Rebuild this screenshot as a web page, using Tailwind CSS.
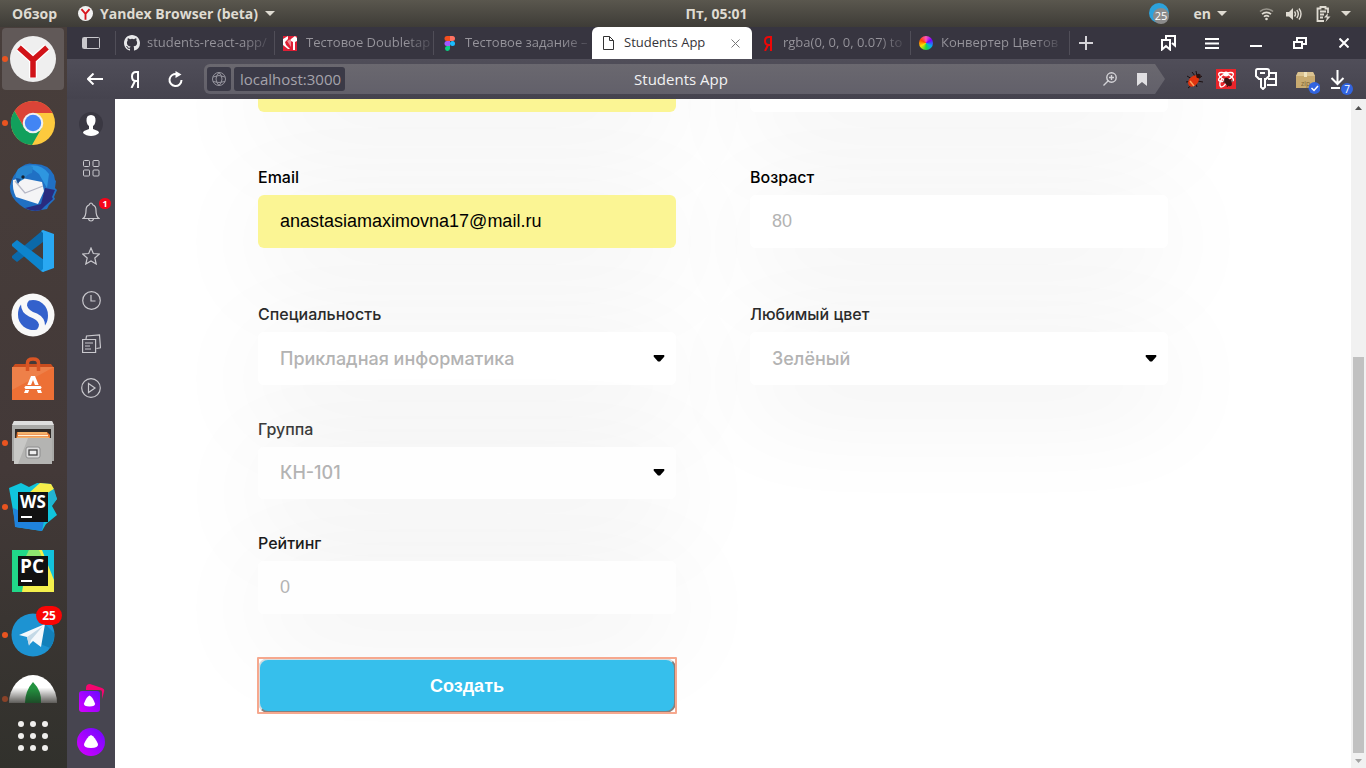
<!DOCTYPE html>
<html lang="ru">
<head>
<meta charset="utf-8">
<title>Students App</title>
<script src="https://cdn.jsdelivr.net/npm/@tailwindcss/browser@4"></script>
</head>
<body class="flex h-screen flex-col overflow-hidden bg-white font-['Open_Sans','Noto_Sans',sans-serif]">

<!-- System bar -->
<header class="flex h-[27px] shrink-0 items-center bg-linear-to-b from-[#5a574e] to-[#3e3c37] text-sm font-bold text-[#dfdbd2]">
  <div class="flex flex-1 items-center pl-3">
    <button class="w-[66px] text-left">Обзор</button>
    <button class="flex items-center gap-[7px] whitespace-nowrap">
      <svg class="size-[15px]" viewBox="0 0 48 48"><circle cx="24" cy="24" r="24" fill="#f2f2f2"/><path d="M11 10l13 15 13-15M24 24v20" fill="none" stroke="#d8141c" stroke-width="6"/></svg>
      Yandex Browser (beta)
      <svg class="h-[5px] w-[10px]" viewBox="0 0 10 5"><path d="M0 0h10L5 5z" fill="#dfdbd2"/></svg>
    </button>
  </div>
  <time class="pl-[70px] text-center">Пт, 05:01</time>
  <div class="flex flex-1 items-center justify-end pr-[15px]">
    <svg class="mr-6 size-[21px]" viewBox="0 0 21 21"><circle cx="10" cy="10" r="10" fill="#2ca2dc"/><circle cx="12" cy="13" r="8" fill="#8b8b8b"/><text x="12" y="17" text-anchor="middle" font-size="11" font-weight="400" font-family="Open Sans" fill="#fff">25</text></svg>
    <button class="mr-8 flex items-center gap-1.5">en <svg class="h-[5px] w-[10px]" viewBox="0 0 10 5"><path d="M0 0h10L5 5z" fill="#dfdbd2"/></svg></button>
    <svg class="mr-3 h-[14px] w-[15px]" viewBox="0 0 15 14" fill="none" stroke="#dfdbd2" stroke-width="1.6"><path d="M1 4.500a9.500 9.500 0 0 1 13 0" opacity=".5"/><path d="M3 7.200a6.500 6.500 0 0 1 9 0M5 9.700a3.500 3.500 0 0 1 5 0"/><circle cx="7.500" cy="12" r="1.300" fill="#dfdbd2" stroke="none"/></svg>
    <svg class="mr-3.5 h-[14px] w-4" viewBox="0 0 16 14" fill="none" stroke="#dfdbd2" stroke-width="1.400"><path d="M0 5h3l4-4v12L3 9.500H0z" fill="#dfdbd2" stroke="none"/><path d="M8.500 4.500q2 2.500 0 5M10.800 3q3 4 0 8M13 1.500q4 5.500 0 11"/></svg>
    <svg class="mr-2.5 h-4 w-[15px]" viewBox="0 0 15 16" fill="none" stroke="#dfdbd2" stroke-width="1.800"><path d="M12 7V2.500H9.500V1h-5v1.500H1.500V15H8M4 5.500h6M4 8.500h4M4 11.500h3"/><path d="M12 7l-4 4.500h3L9.500 16l5-5.500h-3z" fill="#dfdbd2" stroke="none"/></svg>
    <svg class="h-[5px] w-[10px]" viewBox="0 0 10 5"><path d="M0 0h10L5 5z" fill="#dfdbd2"/></svg>
  </div>
</header>

<div class="flex min-h-0 flex-1">

  <!-- Application dock -->
  <nav aria-label="Dock" class="flex w-[67px] shrink-0 flex-col bg-linear-to-b from-[#483e3b] via-[#433938] via-60% to-[#31312c] [&>button]:pr-px">
    <button aria-label="Yandex" class="relative flex h-16 shrink-0 items-center justify-center">
      <span class="absolute inset-y-px right-[3px] left-0.5 rounded bg-[#615958]"></span>
      <i class="absolute left-0.5 size-1.5 rounded-full bg-[#e95420]"></i>
      <svg class="relative size-12" viewBox="0 0 48 48"><circle cx="24" cy="24" r="23" fill="#efefef"/><path d="M10 12.500l14 12.500 14-12.500M24 24v19" fill="none" stroke="#fff" stroke-width="8"/><path d="M10 12.500l14 12.500 14-12.500M24 24v18.500" fill="none" stroke="#d11318" stroke-width="5.500"/></svg>
    </button>
    <button aria-label="Chrome" class="relative flex h-16 shrink-0 items-center justify-center">
      <i class="absolute left-0.5 size-1.5 rounded-full bg-[#e95420]"></i>
      <svg class="size-12" viewBox="0 0 48 48"><circle cx="24" cy="24" r="22" fill="#fdca3e"/><path d="M24 14h19.600A22 22 0 0 0 5.500 12l9.800 17z" fill="#db4437"/><path d="M5.500 12A22 22 0 0 0 23 46l9.700-17-8.700 5-8.700-5z" fill="#12a05c"/><circle cx="24" cy="24" r="10.300" fill="#f1f1f1"/><circle cx="24" cy="24" r="8.200" fill="#4285f4"/></svg>
    </button>
    <button aria-label="Thunderbird" class="flex h-16 shrink-0 items-center justify-center">
      <svg class="size-12" viewBox="0 0 48 48"><path d="M12 4q6-5 12-3 15-1 21 11l1 5 1 1-1 7 2 2-3 7 1 2-6 6-2 4-6 1-4 1q-10 0-17-6Q0 33 1 23 3 12 12 4z" fill="#2070c4"/><path d="M18 3q14-3 22 8l-2 14-8-14q-6-5-12-8z" fill="#2e96e0"/><path d="M36 25l10 2-3 7 1 2-8 7-4 4q-9 2-16-2l16-4z" fill="#292b7e"/><path d="M4 17l9-2 20 4 2 9-6 13-22-7q-4-8-3-17z" fill="#f4f4f6"/><path d="M6 18l10 12 18-7" fill="none" stroke="#b6b8c6" stroke-width="1.300"/><path d="M9 6q9-6 15-2l-1 6q-5 1-8 6l-7 4q-3-8 1-14z" fill="#2785ce"/><path d="M7 15l5 1-3 5z" fill="#1c4d92"/><circle cx="14" cy="14" r="1.700" fill="#17202e"/></svg>
    </button>
    <button aria-label="VS Code" class="flex h-16 shrink-0 items-center justify-center">
      <svg class="size-12" viewBox="0 0 48 48"><path d="M3 31l5 4 26-20V3L3 29z" fill="#0b69aa"/><path d="M3 17l5-4 27 20v12l-3-1L3 19z" fill="#0d84cd"/><path d="M34 3l11 4v34l-11 4-2-1 2-2V6l-2-2z" fill="#29a8f2"/></svg>
    </button>
    <button aria-label="Simplenote" class="flex h-16 shrink-0 items-center justify-center">
      <svg class="size-12" viewBox="0 0 48 48"><circle cx="24" cy="24" r="21.500" fill="#f8f8f8"/><path d="M20 9.500a15 15 0 0 1 19 15q0 6-3 10 0-8-8-12-9-3-10-8 0-3 2-5z" fill="#3361cc"/><path d="M28 38.500a15 15 0 0 1-19-15q0-6 3-10 0 8 8 12 9 3 10 8 0 3-2 5z" fill="#3361cc"/></svg>
    </button>
    <button aria-label="Software" class="flex h-16 shrink-0 items-center justify-center">
      <svg class="size-12" viewBox="0 0 48 48"><path d="M3 13l3-4h36l3 4z" fill="#ca4d1e"/><path d="M3 12h42v33H3z" fill="#ed7035"/><path d="M3 12h42L3 35z" fill="#ee8049"/><path d="M18.500 16V8q0-4 5.500-4t5.500 4v8" fill="none" stroke="#d95524" stroke-width="3.500"/><path d="M22 21h4l7 17h-4l-5-13-5 13h-4z" fill="#fff"/><rect x="15" y="30.500" width="18" height="4" rx="2" fill="#fff" stroke="#ed7035"/></svg>
    </button>
    <button aria-label="Files" class="relative flex h-16 shrink-0 items-center justify-center">
      <i class="absolute left-0.5 size-1.5 rounded-full bg-[#e95420]"></i>
      <svg class="size-12" viewBox="0 0 48 48"><path d="M5 2h38l2 5v35H3V7z" fill="#a9a9a7"/><path d="M5 2h38l2 4H3z" fill="#dedede"/><path d="M6 10h36v12H6z" fill="#302a27"/><path d="M8 13h30l3 3v5H7z" fill="#e87a35"/><path d="M9 14h29M8 19h32" stroke="#f6c47b" stroke-width="1.500"/><path d="M9 16.500h30" stroke="#fff5d9" stroke-width="1.500"/><path d="M5 19h38v26H5z" fill="#b4b4b2"/><path d="M5 19h14L9 45H5z" fill="#c8c8c6"/><rect x="17" y="28" width="14" height="11" rx="2" fill="#dcdcdc" stroke="#8e8e8e"/><rect x="20" y="31" width="8" height="5" fill="#eee" stroke="#444" stroke-width="1.300"/></svg>
    </button>
    <button aria-label="WebStorm" class="relative flex h-16 shrink-0 items-center justify-center">
      <i class="absolute left-0.5 size-1.5 rounded-full bg-[#e95420]"></i>
      <svg class="size-12" viewBox="0 0 48 48"><path d="M0 5l12-5 8 4 8-4 14 1 6 15-5 7 5 9-11 9-4 7-26-4z" fill="#10c4dc"/><path d="M21 9L31 0l11 1 3 5-8 5z" fill="#f6ee4a"/><path d="M45 6l3 10-6 7-3-13z" fill="#22b4d2"/><path d="M4 25l2 19 27 4 2-10z" fill="#1f82dc"/><rect x="9" y="9" width="30" height="30" fill="#111"/><text x="24" y="25" text-anchor="middle" font-family="Open Sans" font-weight="700" font-size="17" fill="#fff">WS</text><path d="M12 34h11" stroke="#fff" stroke-width="2"/></svg>
    </button>
    <button aria-label="PyCharm" class="flex h-16 shrink-0 items-center justify-center">
      <svg class="size-12" viewBox="0 0 48 48"><path d="M3 3h42v42H3z" fill="#21d789"/><path d="M20 3h15l10 20v22H13z" fill="#f4f04c"/><path d="M33 3h12v30z" fill="#13c2dc"/><path d="M20 3h10l3 7-19 5z" fill="#8de470"/><rect x="9" y="9" width="30" height="30" fill="#111"/><text x="23" y="26" text-anchor="middle" font-family="Open Sans" font-weight="700" font-size="19" fill="#fff">PC</text><path d="M12 34h11" stroke="#fff" stroke-width="2"/></svg>
    </button>
    <button aria-label="Telegram, 25" class="relative flex h-16 shrink-0 items-center justify-center">
      <i class="absolute left-0.5 size-1.5 rounded-full bg-[#e95420]"></i>
      <svg class="size-12" viewBox="0 0 48 48"><circle cx="24" cy="24" r="21.500" fill="#1d93d2"/><path d="M29 32l6-20 10 10q1 8-4 15z" fill="#1380ba"/><path d="M10 24l26-11-4 23-8-6-4 4-2-8z" fill="#f4f8fb"/><path d="M18 26l16-11-12 14-2 6z" fill="#c4d9e6"/></svg>
      <span class="absolute top-[3px] left-9 flex h-[19px] w-[26px] items-center justify-center rounded-full bg-[#f90505] text-xs font-bold text-white">25</span>
    </button>
    <button aria-label="MongoDB Compass" class="relative flex h-[37px] shrink-0 justify-center overflow-hidden pt-[7px]">
      <i class="absolute top-[29px] left-0.5 size-1.5 rounded-full bg-[#8a4228]"></i>
      <svg class="h-[30px] w-12" viewBox="0 0 48 30"><defs><linearGradient id="fade" x2="0" y2="1"><stop offset=".45" stop-color="#fff"/><stop offset="1" stop-color="#fff" stop-opacity=".2"/></linearGradient><linearGradient id="leaf" x2="0" y2="1"><stop offset=".3" stop-color="#23923f"/><stop offset="1" stop-color="#1d4c28"/></linearGradient></defs><path d="M0 29a24 28 0 0 1 48 0z" fill="url(#fade)"/><path d="M24 8q9 9 8 21H16q0-12 8-21z" fill="url(#leaf)"/></svg>
    </button>
    <button aria-label="Все приложения" class="flex justify-center pt-[17px]">
      <svg class="size-[30px]" viewBox="0 0 30 30" fill="#f0efed"><circle cx="3" cy="3" r="3"/><circle cx="15" cy="3" r="3"/><circle cx="27" cy="3" r="3"/><circle cx="3" cy="15" r="3"/><circle cx="15" cy="15" r="3"/><circle cx="27" cy="15" r="3"/><circle cx="3" cy="27" r="3"/><circle cx="15" cy="27" r="3"/><circle cx="27" cy="27" r="3"/></svg>
    </button>
  </nav>

  <!-- Browser window -->
  <div class="flex min-w-0 flex-1 flex-col">

    <!-- Tabs -->
    <div class="flex h-8 shrink-0 items-stretch bg-[#373540] text-[13px] text-[#97959c]">
      <button aria-label="Панель вкладок" class="flex w-12 shrink-0 items-center justify-center"><svg class="h-3 w-[18px]" viewBox="0 0 18 12"><rect x=".5" y=".5" width="17" height="11" rx="1" fill="none" stroke="#c9c8cc"/><path d="M1 1h4v10H1z" fill="#c9c8cc"/></svg></button>
      <button class="relative flex w-[159px] items-center gap-[7px] pl-[9px] whitespace-nowrap before:absolute before:inset-y-1 before:left-0 before:w-px before:bg-[#504e58]">
        <svg class="size-4 shrink-0" viewBox="0 0 16 16" fill="#e8e8ea"><path d="M8 0C3.580 0 0 3.580 0 8c0 3.540 2.290 6.530 5.470 7.590.4.070.55-.17.55-.38v-1.490c-2.010.37-2.530-.49-2.690-.94-.09-.23-.48-.94-.82-1.130-.28-.15-.68-.52-.01-.53.63-.01 1.080.58 1.230.82.72 1.210 1.870.87 2.330.66.07-.52.28-.87.51-1.070-1.780-.2-3.640-.89-3.640-3.950 0-.87.31-1.590.82-2.150-.08-.2-.36-1.020.08-2.120 0 0 .67-.21 2.200.82a7.600 7.600 0 0 1 4 0c1.530-1.040 2.200-.82 2.200-.82.44 1.100.16 1.920.08 2.120.51.56.82 1.270.82 2.150 0 3.070-1.870 3.750-3.650 3.950.29.25.54.73.54 1.480v2.200c0 .21.15.46.55.38A8 8 0 0 0 16 8c0-4.420-3.580-8-8-8z"/></svg>
        <span class="bg-linear-to-r from-[#97959c] from-80% to-[#4f4d57] bg-clip-text text-left text-transparent">students-react-app/</span>
      </button>
      <button class="relative flex w-[159px] items-center gap-2 pl-[9px] whitespace-nowrap before:absolute before:inset-y-1 before:left-0 before:w-px before:bg-[#504e58]">
        <svg class="size-[15px] shrink-0" viewBox="0 0 15 15"><path d="M0 0h14v15H0z" fill="#df1f35"/><path d="M0 3l5-3v3L2 6l1 3 4 4H5L0 9zM8 3l4-3 2 2v3l-2 1v8h-2V6L8 5z" fill="#fff"/><path d="M4 5l4-2v8z" fill="#f18a94"/></svg>
        <span class="bg-linear-to-r from-[#97959c] from-80% to-[#4f4d57] bg-clip-text text-left text-transparent">Тестовое Doubletap</span>
      </button>
      <button class="relative flex w-[159px] items-center gap-2 pl-[9px] whitespace-nowrap before:absolute before:inset-y-1 before:left-0 before:w-px before:bg-[#504e58]">
        <svg class="h-[15px] w-[15px] shrink-0" viewBox="0 0 15 15"><path d="M8 0H5a2.500 2.500 0 0 0 0 5h3z" fill="#f24e1e"/><path d="M8 0h2.500a2.500 2.500 0 0 1 0 5H8z" fill="#ff7262"/><path d="M8 5H5a2.500 2.500 0 0 0 0 5h3z" fill="#a259ff"/><circle cx="10.500" cy="7.500" r="2.500" fill="#1abcfe"/><path d="M8 10H5a2.500 2.500 0 1 0 3 2.500z" fill="#0acf83"/></svg>
        <span class="bg-linear-to-r from-[#97959c] from-80% to-[#4f4d57] bg-clip-text text-left text-transparent">Тестовое задание –</span>
      </button>
      <button aria-current="page" class="flex w-40 items-center gap-2.5 rounded-t-md bg-white pr-3 pl-[11px] whitespace-nowrap text-[#35343a]">
        <svg class="h-[14px] w-[11px] shrink-0" viewBox="0 0 11 14" fill="none" stroke="#333"><path d="M.5.500h6l4 4v9H.5zM6.500.500v4h4"/></svg>
        <span class="flex-1 text-left">Students App</span>
        <svg class="size-[9px]" viewBox="0 0 9 9" stroke="#777"><path d="M.5.500l8 8M8.500.500l-8 8"/></svg>
      </button>
      <button class="flex w-[158px] items-center gap-2.5 pl-[11px] whitespace-nowrap">
        <svg class="h-[15px] w-[10px] shrink-0" viewBox="0 0 10 15" fill="none" stroke="#ed0707" stroke-width="2"><path d="M8 15V1H6Q2 1 2 5t4 4h2M5 9L2 15"/></svg>
        <span class="bg-linear-to-r from-[#97959c] from-80% to-[#4f4d57] bg-clip-text text-left text-transparent">rgba(0, 0, 0, 0.07) to</span>
      </button>
      <button class="relative flex w-[159px] items-center gap-2 pl-[9px] whitespace-nowrap before:absolute before:inset-y-1 before:left-0 before:w-px before:bg-[#504e58]">
        <span class="size-[14px] shrink-0 rounded-full bg-[conic-gradient(#f5b,#70f,#03a9f4,#1cdc3c,#fd0,#f40,#f5b)]"></span>
        <span class="bg-linear-to-r from-[#97959c] from-80% to-[#4f4d57] bg-clip-text text-left text-transparent">Конвертер Цветов</span>
      </button>
      <button aria-label="Новая вкладка" class="relative flex w-[34px] shrink-0 items-center justify-center before:absolute before:inset-y-1 before:left-0 before:w-px before:bg-[#504e58]"><svg class="size-[14px]" viewBox="0 0 14 14" stroke="#d5d4d8" stroke-width="2"><path d="M7 0v14M0 7h14"/></svg></button>
      <div class="ml-auto flex shrink-0">
        <button aria-label="Закладки" class="flex w-11 items-center justify-center"><svg class="h-4 w-[15px]" viewBox="0 0 15 16" fill="none" stroke="#fff" stroke-width="2"><path d="M1 5h8v9.500L5 11l-4 3.500zM5 4.500V1h9v9.500L11 8"/></svg></button>
        <button aria-label="Меню" class="flex w-11 items-center justify-center"><svg class="h-[11px] w-[14px]" viewBox="0 0 14 11" stroke="#fff" stroke-width="2"><path d="M0 1h14M0 5.500h14M0 10h14"/></svg></button>
        <button aria-label="Свернуть" class="flex w-11 items-center justify-center"><svg class="h-2 w-3" viewBox="0 0 12 8" stroke="#fff" stroke-width="2"><path d="M0 7h12"/></svg></button>
        <button aria-label="Восстановить" class="flex w-11 items-center justify-center"><svg class="h-3 w-[14px]" viewBox="0 0 14 12" fill="none" stroke="#fff" stroke-width="2"><path d="M1 5h8v6H1zM4 4V1h9v6h-3"/></svg></button>
        <button aria-label="Закрыть" class="flex w-11 items-center justify-center"><svg class="size-[10px]" viewBox="0 0 10 10" stroke="#fff" stroke-width="2"><path d="M.5.500l9 9M9.500.500l-9 9"/></svg></button>
      </div>
    </div>

    <!-- Toolbar -->
    <div class="flex h-10 shrink-0 items-center bg-linear-to-b from-[#504e59] to-[#45434e]">
      <button aria-label="Назад" class="flex w-14 justify-center"><svg class="h-3 w-4" viewBox="0 0 16 12" fill="none" stroke="#fff" stroke-width="2"><path d="M16 6H1M6.500.500L1 6l5.500 5.500"/></svg></button>
      <button aria-label="Яндекс" class="flex w-6 justify-center"><svg class="h-[17px] w-[10px]" viewBox="0 0 10 17" fill="none" stroke="#fff" stroke-width="2"><path d="M8 17V1H6Q2 1 2 5.500T6 10h2M5 10L1.500 17"/></svg></button>
      <button aria-label="Обновить" class="flex w-[57px] justify-center"><svg class="h-[17px] w-[15px]" viewBox="0 0 15 17" fill="none" stroke="#fff" stroke-width="2"><path d="M9 3.200A6 6 0 1 0 13.500 9"/><path d="M7.500 0l6 3.500-6 3.500z" fill="#fff" stroke="none"/></svg></button>
      <div class="flex h-[30px] min-w-0 flex-1 items-center rounded-l-md bg-linear-to-b from-[#6a686f] to-[#62606a] pl-[3px] [clip-path:polygon(0_0,calc(100%-10px)_0,100%_50%,calc(100%-10px)_100%,0_100%)]">
        <button aria-label="Сайт" class="mr-[3px] flex size-6 items-center justify-center rounded-[3px] bg-[#3b3a47]"><svg class="size-[14px]" viewBox="0 0 14 14" fill="none" stroke="#96959e"><circle cx="7" cy="7" r="6.500"/><path d="M7 .5q-6 6.500 0 13M7 .5q6 6.500 0 13M1 5q6-3 12 0M1 9.500q6 2 12 0"/></svg></button>
        <input aria-label="Адрес" value="localhost:3000" class="h-6 w-[111px] rounded-[3px] bg-[#3b3a47] pl-1.5 text-[15px] text-[#a5a3ab]">
        <span class="flex-1 pr-[86px] text-center text-[15px] leading-5 text-[#f2f2f3]">Students App</span>
        <button aria-label="Масштаб" class="mr-5"><svg class="size-[14px]" viewBox="0 0 14 14" fill="none" stroke="#d4d3d7" stroke-width="1.400"><circle cx="8.500" cy="5.500" r="4.700"/><path d="M5.500 8.500L.5 13.500M8.500 3v5M6 5.500h5"/></svg></button>
        <button aria-label="В закладки" class="mr-[18px]"><svg class="h-[13px] w-[10px]" viewBox="0 0 10 13" fill="#e0dfe2"><path d="M0 0h10v13L5 9l-5 4z"/></svg></button>
      </div>
      <div class="flex w-[201px] shrink-0 items-center pl-5">
        <button aria-label="Отладка" class="mr-3 shrink-0"><svg class="size-[19px]" viewBox="0 0 19 19"><path d="M2 6l5 3M1 12l6-1M3 18l5-4M17 6l-4 3M18 12l-6-1M11 1l1 5M7 2l3 4M12 17l-2-5" stroke="#1b0f10"/><ellipse cx="8.500" cy="11" rx="4.500" ry="6.500" transform="rotate(42 8.500 11)" fill="#e0340f"/><path d="M5 11l4 5" stroke="#ffa05a" stroke-width="1.500"/><circle cx="13.500" cy="6" r="2.300" fill="#2b1211"/></svg></button>
        <button aria-label="React" class="mr-[19px] shrink-0"><svg class="size-5" viewBox="0 0 20 20"><path d="M0 0h20v20H0z" fill="#e9252b"/><g fill="none" stroke="#fff" stroke-width="1.400"><ellipse cx="10" cy="8" rx="8" ry="3.200" transform="rotate(25 10 8)"/><ellipse cx="10" cy="8" rx="8" ry="3.200" transform="rotate(-25 10 8)"/><path d="M6 10q-4 5-1 8 3 0 5-4"/></g><circle cx="10" cy="5" r="2.500" fill="#fff"/><ellipse cx="12" cy="13" rx="3" ry="5" transform="rotate(-40 12 13)" fill="#3a1414"/><path d="M7 13l10-1M11 18l4-8" stroke="#3a1414"/></svg></button>
        <button aria-label="Пароли" class="mr-[19px] shrink-0"><svg class="h-[22px] w-[22px]" viewBox="0 0 22 22" fill="none" stroke="#fff" stroke-width="2"><path d="M2.500 1h9.500q2 0 2 2v5l-3 3H10v8l-2 2-2-2v-8H4L1 8V3q0-2 1.500-2zM5 5h5"/><path d="M14 5h7v12h-9M13 11h8"/></svg></button>
        <button aria-label="Архив" class="mr-2.5 shrink-0 pt-[5px]"><svg class="size-6" viewBox="0 0 24 24"><path d="M2 2h15l2 4v12H0V6z" fill="#c8aa70"/><path d="M2 2h15l2 4H0z" fill="#dbc391"/><path d="M8 2h3v5H8z" fill="#efe2bd"/><text x="5" y="16" font-family="Open Sans" font-size="7" fill="#826837">zip</text><circle cx="18.500" cy="18" r="6" fill="#3264df"/><path d="M15.500 18l2.500 2.500 4-4.500" fill="none" stroke="#fff" stroke-width="1.500"/></svg></button>
        <button aria-label="Загрузки, 7" class="shrink-0 pt-[3px]"><svg class="h-[28px] w-[24px]" viewBox="0 0 24 28"><path d="M7.500 3v14M1.500 11l6 6 6-6M1 21h9" fill="none" stroke="#fff" stroke-width="2"/><circle cx="17" cy="22" r="6" fill="#3264df"/><text x="17" y="25.500" text-anchor="middle" font-family="Open Sans" font-size="10" fill="#fff">7</text></svg></button>
      </div>
    </div>

    <div class="flex min-h-0 flex-1">
      <!-- Browser side panel -->
      <nav aria-label="Боковая панель" class="flex w-12 shrink-0 flex-col bg-[#474550] pt-[3px] [&>button]:flex [&>button]:h-11 [&>button]:shrink-0 [&>button]:items-center [&>button]:justify-center">
        <button aria-label="Профиль"><svg class="size-6" viewBox="0 0 24 24"><circle cx="12" cy="12" r="12" fill="#3a3842"/><path d="M12 3q5 0 4.500 6-.5 4-2.500 5v3l5 2q1 1 1 2-3 3-8 3t-8-3q0-1 1-2l5-2v-3q-2-1-2.500-5Q7 3 12 3z" fill="#fff"/></svg></button>
        <button aria-label="Табло"><svg class="size-[17px]" viewBox="0 0 17 17" fill="none" stroke="#c9c8cd"><rect x=".5" y=".5" width="6" height="6" rx="1"/><rect x="10" y=".5" width="6" height="6" rx="1"/><rect x=".5" y="10" width="6" height="6" rx="1"/><rect x="10" y="10" width="6" height="6" rx="1"/></svg></button>
        <button aria-label="Уведомления, 1" class="relative"><svg class="h-5 w-[18px]" viewBox="0 0 18 20" fill="none" stroke="#c9c8cd" stroke-width="1.200"><path d="M1 16.500q3-2 3-8Q4 4 7 3q1-2 2-2t2 2q3 1 3 5.500 0 6 3 8zM6.500 17q.5 2 2.500 2t2.500-2"/></svg><span class="absolute top-2 right-1 flex h-[11px] w-3 items-center justify-center rounded-full bg-[#f5051a] text-[9px] font-bold text-white">1</span></button>
        <button aria-label="Избранное"><svg class="size-[18px]" viewBox="0 0 18 18" fill="none" stroke="#c9c8cd" stroke-width="1.200"><path d="M9 1l2.300 5.500 6 .5-4.500 4 1.400 6L9 14l-5.200 3 1.400-6L.7 7l6-.5z"/></svg></button>
        <button aria-label="История"><svg class="size-[19px]" viewBox="0 0 19 19" fill="none" stroke="#c9c8cd" stroke-width="1.200"><circle cx="9.500" cy="9.500" r="8.800"/><path d="M9 4v6h4.500"/></svg></button>
        <button aria-label="Коллекции"><svg class="h-5 w-[19px]" viewBox="0 0 19 20" fill="none" stroke="#c9c8cd" stroke-width="1.200"><path d="M.6 5.500h13v13H.6zM3 9h8M3 12h5M3 15h6M4 5l.5-3L17.500.800l1 13-4 .700"/></svg></button>
        <button aria-label="Видео"><svg class="size-5" viewBox="0 0 20 20" fill="none" stroke="#c9c8cd" stroke-width="1.200"><circle cx="10" cy="10" r="9.300"/><path d="M7.500 5.500l6.500 4.500-6.500 4.500z"/></svg></button>
        <span class="flex-1"></span>
        <button aria-label="Алиса в коллекциях"><svg class="size-[28px]" viewBox="0 0 28 28"><defs><linearGradient id="vio" x1="1" x2="0" y2="1"><stop stop-color="#6c08ff"/><stop offset="1" stop-color="#d800ff"/></linearGradient></defs><path d="M9 4q0-4 4-4l12 4q3 1 2 4l-2 7V8q0-2-2-2H9z" fill="#f5056f"/><rect x="2" y="7" width="21" height="21" rx="3" fill="url(#vio)"/><path d="M12.500 11.500q3 1 5.500 8 .5 3-5.500 3T7 19.500q2.500-7 5.500-8z" fill="#fff"/></svg></button>
        <button aria-label="Алиса" class="mb-1"><svg class="size-7" viewBox="0 0 28 28"><circle cx="14" cy="14" r="14" fill="url(#vio)"/><path d="M14 7q4 2 7 9 .5 4-7 4t-7-4q3-7 7-9z" fill="#fff"/></svg></button>
      </nav>

      <!-- Page -->
      <main class="min-w-0 flex-1 overflow-hidden bg-white">
        <form class="-mt-10 grid grid-cols-2 items-start gap-x-[74px] pr-[183px] pl-[143px] text-base font-medium text-black font-['Inter','Noto_Sans',sans-serif]">
          <div>
            <div class="rounded-md shadow-[0_20px_110px_rgba(0,0,0,0.08)]"><input aria-label="ФИО" class="relative block h-[53px] w-full rounded-md bg-[#fbf594] px-[22px]"></div>

            <label for="email" class="mt-[55px] block h-7 leading-5">Email</label>
            <div class="rounded-md shadow-[0_20px_110px_rgba(0,0,0,0.08)]"><input id="email" type="email" value="anastasiamaximovna17@mail.ru" class="relative block h-[53px] w-full rounded-md bg-[#fbf594] px-[22px] font-['Liberation_Sans',sans-serif] text-lg font-normal"></div>

            <label for="spec" class="mt-14 block h-7 leading-5 text-[#2b2b2b]">Специальность</label>
            <div class="relative rounded-md shadow-[0_20px_110px_rgba(0,0,0,0.08)]"><select id="spec" class="relative block h-[53px] w-full appearance-none rounded-md bg-white px-[22px] text-lg text-[#b3b3b3]"><option>Прикладная информатика</option></select><svg class="pointer-events-none absolute top-[23px] right-[11px] h-[7px] w-3" viewBox="0 0 12 7"><path d="M1 0h10q1 1 0 2L7 6.500H5L1 2Q0 1 1 0z"/></svg></div>

            <label for="group" class="mt-[34px] block h-7 leading-5 text-[#3c3c3c]">Группа</label>
            <div class="relative rounded-md shadow-[0_20px_110px_rgba(0,0,0,0.08)]"><select id="group" class="relative block h-[52px] w-full appearance-none rounded-md bg-[#fefefe] px-[22px] text-lg text-[#b3b3b3]"><option>КН-101</option></select><svg class="pointer-events-none absolute top-[22px] right-[11px] h-[7px] w-3" viewBox="0 0 12 7"><path d="M1 0h10q1 1 0 2L7 6.500H5L1 2Q0 1 1 0z"/></svg></div>

            <label for="rating" class="mt-[34px] block h-7 leading-5 text-[#1c1c1c]">Рейтинг</label>
            <div class="rounded-md shadow-[0_20px_110px_rgba(0,0,0,0.08)]"><input id="rating" placeholder="0" class="relative block h-[53px] w-full rounded-md bg-[#fefefe] px-[22px] font-['Liberation_Sans',sans-serif] text-lg font-normal placeholder:text-[#b3b3b3]"></div>

            <button class="relative mt-11 block h-[55px] w-full rounded-[10px] border-2 border-t-[#d5dde0] border-r-[#87807d] border-b-[#87807d] border-l-[#d5dde0] bg-[#36bfec] font-['Liberation_Sans',sans-serif] text-lg leading-6 font-bold text-white before:absolute before:-inset-[3px] before:rounded-[1px] before:border-2 before:border-[#f6a88e]">Создать</button>
          </div>
          <div>
            <div class="rounded-md shadow-[0_20px_110px_rgba(0,0,0,0.08)]"><input aria-label="Дополнительно" class="relative block h-[53px] w-full rounded-md bg-white px-[22px]"></div>

            <label for="age" class="mt-[55px] block h-7 leading-5">Возраст</label>
            <div class="rounded-md shadow-[0_20px_110px_rgba(0,0,0,0.08)]"><input id="age" placeholder="80" class="relative block h-[53px] w-full rounded-md bg-white px-[22px] font-['Liberation_Sans',sans-serif] text-lg font-normal placeholder:text-[#b3b3b3]"></div>

            <label for="color" class="mt-14 block h-7 leading-5 text-[#2b2b2b]">Любимый цвет</label>
            <div class="relative rounded-md shadow-[0_20px_110px_rgba(0,0,0,0.08)]"><select id="color" class="relative block h-[53px] w-full appearance-none rounded-md bg-white px-[22px] text-lg text-[#b3b3b3]"><option>Зелёный</option></select><svg class="pointer-events-none absolute top-[23px] right-[11px] h-[7px] w-3" viewBox="0 0 12 7"><path d="M1 0h10q1 1 0 2L7 6.500H5L1 2Q0 1 1 0z"/></svg></div>
          </div>
        </form>
      </main>

      <!-- Scrollbar -->
      <div aria-hidden="true" class="flex w-[15px] shrink-0 flex-col items-center bg-[#f1f1f1]">
        <span class="flex h-[17px] items-center"><svg class="h-1 w-[7px]" viewBox="0 0 7 4"><path d="M3.500 0L7 4H0z" fill="#505050"/></svg></span>
        <span class="flex-[241]"></span>
        <span class="w-[11px] flex-[396] bg-[#c1c1c1]"></span>
        <span class="flex h-[15px] items-center"><svg class="h-1 w-[7px]" viewBox="0 0 7 4"><path d="M0 0h7L3.500 4z" fill="#a3a3a3"/></svg></span>
      </div>
    </div>
  </div>
</div>
</body>
</html>
